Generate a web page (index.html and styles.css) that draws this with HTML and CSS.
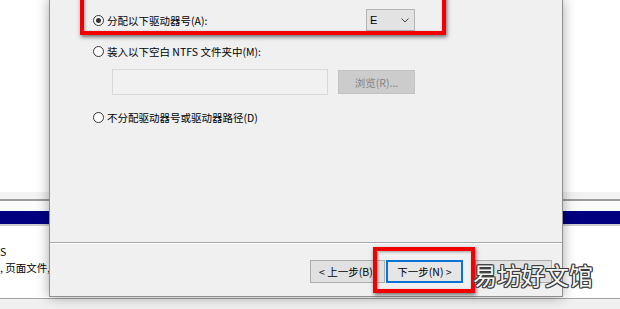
FILE: index.html
```html
<!DOCTYPE html>
<html lang="zh-CN">
<head>
  <meta charset="UTF-8">
  <title>新建简单卷向导 - 分配驱动器号和路径</title>
  <link rel="stylesheet" href="styles.css">
</head>
<body>

  <!-- Disk management window behind the wizard -->
  <div class="backdrop">
    <div class="bg-top"></div>
    <div class="bg-header"></div>
    <div class="bg-gap"></div>
    <div class="bg-disk-bar"></div>
    <div class="bg-rule"></div>
    <div class="bg-info">
      <div class="bg-line">S</div>
      <div class="bg-line">, 页面文件, 故障转储, 主分区</div>
    </div>
    <div class="bg-status"></div>
  </div>

  <!-- Wizard dialog -->
  <div class="dialog">
    <div class="dialog-body">
      <div class="option-row first">
        <label class="radio-label">
          <span class="radio checked"></span>
          分配以下驱动器号(A):
        </label>
        <div class="select">
          <span>E</span>
          <svg class="chevron" width="8" height="5" viewBox="0 0 8 5">
            <path d="M0.5 0.5 L4 4 L7.5 0.5" fill="none" stroke="#444" stroke-width="1"/>
          </svg>
        </div>
      </div>

      <div class="option-row second">
        <label class="radio-label">
          <span class="radio"></span>
          装入以下空白 NTFS 文件夹中(M):
        </label>
      </div>

      <div class="folder-row">
        <div class="text-field"></div>
        <button class="btn-browse" disabled>浏览(R)...</button>
      </div>

      <div class="option-row third">
        <label class="radio-label">
          <span class="radio"></span>
          不分配驱动器号或驱动器路径(D)
        </label>
      </div>
    </div>

    <div class="dialog-footer">
      <button class="btn btn-back">&lt; 上一步(B)</button>
      <button class="btn btn-next">下一步(N) &gt;</button>
      <!-- cancel button sits under the watermark, its caption is not visible -->
      <button class="btn btn-cancel" aria-label="取消"></button>
    </div>
  </div>

  <!-- Highlight marks drawn over the screenshot -->
  <div class="mark mark-letter"></div>
  <div class="mark mark-next"></div>

  <div class="watermark">易坊好文馆</div>

</body>
</html>
```

FILE: styles.css
```css
/* Page */
html, body {
  margin: 0;
  padding: 0;
}

body {
  position: relative;
  width: 620px;
  height: 309px;
  overflow: hidden;
  background: #fff;
  font-family: "Noto Sans CJK SC", "Noto Sans", sans-serif;
  font-size: 10.5px;
  color: #000;
}

/* Background window */
.backdrop {
  display: flex;
  flex-direction: column;
  height: 309px;
}

.bg-top {
  height: 192px;
  background: #fff;
}

.bg-header {
  height: 7px;
  background: #f2f2f2;
  border-bottom: 2px solid #9a9a9a;
}

.bg-gap {
  height: 10px;
  background: #fbfbfb;
}

.bg-disk-bar {
  height: 13px;
  background: #000080;
}

.bg-rule {
  height: 2px;
  background: #cfcfcf;
}

.bg-info {
  height: 72px;
  padding-top: 18px;
  box-sizing: border-box;
  background: #fff;
  white-space: nowrap;
}

.bg-line {
  height: 16px;
  line-height: 16px;
}

.bg-status {
  flex: 1;
  background: #f0f0f0;
  border-top: 1px solid #a5a5a5;
}

/* Dialog */
.dialog {
  position: absolute;
  left: 49px;
  top: -1px;
  width: 514px;
  height: 298px;
  box-sizing: border-box;
  display: flex;
  flex-direction: column;
  background: #f0f0f0;
  border: 1px solid #8f8f8f;
  box-shadow: 0 0 12px rgba(0, 0, 0, 0.35);
}

.dialog-body {
  height: 242px;
  padding-left: 43px;
  box-sizing: border-box;
}

.option-row {
  display: flex;
  align-items: center;
}

.option-row.first {
  height: 22px;
  margin-top: 9px;
}

.option-row.second {
  height: 14px;
  margin-top: 13px;
}

.option-row.third {
  height: 14px;
  margin-top: 15px;
}

.radio-label {
  display: flex;
  align-items: center;
  gap: 3px;
  white-space: nowrap;
}

.radio {
  width: 11px;
  height: 11px;
  box-sizing: border-box;
  border: 1px solid #333;
  border-radius: 50%;
  display: flex;
  align-items: center;
  justify-content: center;
  background: #fff;
}

.radio.checked::after {
  content: "";
  width: 5px;
  height: 5px;
  border-radius: 50%;
  background: #333;
}

.select {
  margin-left: auto;
  margin-right: 147px;
  width: 49px;
  height: 22px;
  box-sizing: border-box;
  border: 1px solid #b4b4b4;
  background: #e3e3e3;
  display: flex;
  align-items: center;
  justify-content: space-between;
  padding: 0 5px 0 3px;
  font-family: "Liberation Sans", sans-serif;
  font-size: 11px;
}

.folder-row {
  display: flex;
  align-items: center;
  gap: 10px;
  margin-top: 11px;
  padding-left: 19px;
}

.text-field {
  width: 216px;
  height: 26px;
  box-sizing: border-box;
  border: 1px solid #d9d9d9;
  background: #f1f1f1;
}

.btn-browse {
  width: 77px;
  height: 24px;
  border: 1px solid #c2c2c2;
  background: #cccccc;
  color: #838383;
  font-family: inherit;
  font-size: 10.5px;
  padding: 0;
}

/* Footer */
.dialog-footer {
  flex: 1;
  border-top: 1px solid #a9a9a9;
  box-shadow: inset 0 1px 0 #fff;
  display: flex;
  align-items: flex-start;
  padding: 17px 0 0 260px;
}

.btn {
  height: 23px;
  box-sizing: border-box;
  border: 1px solid #adadad;
  background: #e1e1e1;
  font-family: inherit;
  font-size: 10.5px;
  color: #000;
  padding: 0;
}

.btn-back {
  width: 75px;
  text-align: left;
  padding-left: 8px;
  white-space: nowrap;
  overflow: hidden;
}

.btn-next {
  width: 77px;
  margin-left: 1px;
  border: 2px solid #0a74d6;
  background: #e6e6e6;
}

.btn-cancel {
  width: 77px;
  margin-left: 12px;
}

/* Red highlight marks */
.mark {
  position: absolute;
  box-sizing: border-box;
  border: 4px solid #f20000;
  box-shadow: 1px 2px 4px rgba(0, 0, 0, 0.55), inset 1px 1px 3px rgba(0, 0, 0, 0.35);
}

.mark-letter {
  left: 80px;
  top: -10px;
  width: 366px;
  height: 45px;
}

.mark-next {
  left: 373px;
  top: 247px;
  width: 102px;
  height: 46px;
}

/* Watermark */
.watermark {
  position: absolute;
  left: 473px;
  top: 260px;
  font-size: 24px;
  line-height: 30px;
  color: #f6f6f6;
  text-shadow:
    -1px -1px 0 #3a3a3a, 1px -1px 0 #3a3a3a,
    -1px 1px 0 #3a3a3a, 1px 1px 0 #3a3a3a,
    0 -1px 0 #3a3a3a, 0 1px 0 #3a3a3a,
    -1px 0 0 #3a3a3a, 1px 0 0 #3a3a3a;
}
```
